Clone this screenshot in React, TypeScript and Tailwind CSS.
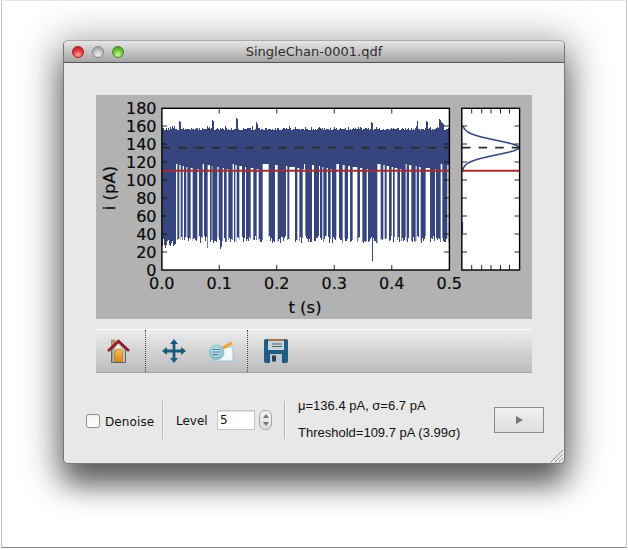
import React from "react";

const gapsA: [number, number][] = [[48,52],[58,62],[68,72],[79,82],[92,98],[112,117],[128,132],[143,150],[155,157],[172,176],[188,192],[200,205],[218,222],[226,230],[238,246],[255,258],[272,280],[290,296],[308,326],[345,353],[378,382],[388,405],[412,418],[428,436]];
const gapsB: [number, number][] = [[0,3],[24,30],[45,48],[55,58],[68,72],[80,84],[97,105],[116,122],[132,138],[146,160],[168,175],[188,192],[220,230],[238,242],[248,255],[263,267],[272,280],[288,292],[305,308],[315,322],[335,338],[345,350],[365,378],[393,396],[410,415],[430,434]];
const gaps = [
  ...gapsA.map(([a, b]) => [160 + a / 3, 160 + b / 3]),
  ...gapsB.map(([a, b]) => [304 + a / 3, 304 + b / 3]),
];

let seed = 12345;
const rnd = () => {
  seed = (seed * 16807) % 2147483647;
  return seed / 2147483647;
};

const peaks: Record<number, number> = { 179: 121, 180: 122, 212: 120, 213: 121, 236: 118, 237: 119, 256: 122, 257: 124, 371: 122, 372: 123, 417: 121, 426: 121, 427: 122, 439: 119, 440: 120, 441: 122, 442: 123, 443: 124 };
const deep: Record<number, number> = { 372: 261, 207: 248, 208: 247, 220: 249, 221: 247, 348: 248, 183: 246, 165: 248 };

const cols: { x: number; top: number; bottom: number }[] = [];
for (let x = 162; x < 449; x++) {
  const top = peaks[x] ?? Math.round(128 + rnd() * 2.4 - (rnd() > 0.88 ? 2 : 0));
  const bottom = deep[x] ?? Math.round(236 + rnd() * 7 + (x < 176 ? 3 : 0));
  cols.push({ x, top, bottom });
}

const yTicks = [20, 40, 60, 80, 100, 120, 140, 160];
const yOf = (v: number) => 270 - v * 0.9;
const xTicks = [0, 0.1, 0.2, 0.3, 0.4, 0.5];
const xOf = (v: number) => 161.7 + v * 575.2;
const sideTicks = [471.7, 481.7, 491, 500.5, 509.5];

let gauss = "";
for (let y = 126; y <= 170; y += 1) {
  const x = 462.5 + 56.5 * Math.exp(-((y - 147.6) ** 2) / (2 * 7.2 ** 2));
  gauss += `${y === 126 ? "M" : "L"}${x.toFixed(1)} ${y} `;
}

function Chart() {
  const font = { fontFamily: '"DejaVu Sans", sans-serif', fontSize: 16 };
  return (
    <svg width={436} height={224} viewBox="96 95 436 224" className="block">
      <rect x={162} y={108.5} width={287.3} height={161.5} fill="#fff" />
      <rect x={462} y={108.5} width={57.5} height={161.5} fill="#fff" />
      {cols.map((c) => (
        <rect key={c.x} x={c.x} y={c.top} width={1} height={c.bottom - c.top} fill="#37457f" />
      ))}
      {gaps.map(([a, b], i) => (
        <rect key={i} x={a} y={164 + (i * 7) % 6} width={b - a} height={106 - ((i * 7) % 6)} fill="#fff" />
      ))}
      <path d="M162 147.6H449" stroke="#2b2b2b" strokeWidth={1.8} strokeDasharray="8.5 8.1" />
      <path d="M162 170.7H449" stroke="#a52c32" strokeWidth={2} />

      <path d={gauss} fill="none" stroke="#37457f" strokeWidth={1.5} />
      <path d="M462.6 222V233" stroke="#37457f" strokeWidth={1} />
      <path d="M462 147.6H519" stroke="#2b2b2b" strokeWidth={1.8} strokeDasharray="8.5 8.1" />
      <path d="M462 170.7H519" stroke="#a52c32" strokeWidth={2} />

      <g stroke="#111" strokeWidth={0.9} fill="none">
        {yTicks.map((v) => (
          <path key={v} d={`M162 ${yOf(v)}h5 M449 ${yOf(v)}h-5 M462 ${yOf(v)}h5 M519.5 ${yOf(v)}h-5`} />
        ))}
        {xTicks.slice(1, 5).map((v) => (
          <path key={v} d={`M${xOf(v)} 108.5v5 M${xOf(v)} 270v-5`} />
        ))}
        {sideTicks.map((x) => (
          <path key={x} d={`M${x} 108.5v5 M${x} 270v-5`} />
        ))}
      </g>
      <rect x={161.9} y={108.3} width={287.5} height={161.7} fill="none" stroke="#000" strokeWidth={1.4} />
      <rect x={461.8} y={108.3} width={57.8} height={161.7} fill="none" stroke="#000" strokeWidth={1.4} />

      <g {...font} fill="#0a0a0a" stroke="#0a0a0a" strokeWidth={0.2}>
        {[0, ...yTicks, 180].map((v) => (
          <text key={v} x={156.5} y={yOf(v) + 5.5} textAnchor="end">
            {v}
          </text>
        ))}
        {xTicks.map((v) => (
          <text key={v} x={xOf(v)} y={289} textAnchor="middle">
            {v.toFixed(1)}
          </text>
        ))}
        <text x={305} y={313} textAnchor="middle" fontSize={16.5}>
          t (s)
        </text>
        <text transform="translate(115 188) rotate(-90)" textAnchor="middle" fontSize={16.5}>
          i (pA)
        </text>
      </g>
    </svg>
  );
}

function HomeIcon() {
  return (
    <svg width={23} height={24} viewBox="0 0 23 24">
      <defs>
        <linearGradient id="door" x1="0" y1="0" x2="0" y2="1">
          <stop offset="0" stopColor="#f6c052" />
          <stop offset="1" stopColor="#e08a1c" />
        </linearGradient>
        <linearGradient id="wall" x1="0" y1="0" x2="1" y2="0">
          <stop offset="0" stopColor="#8f8f8f" />
          <stop offset="0.4" stopColor="#f4f1ea" />
          <stop offset="1" stopColor="#bdbab2" />
        </linearGradient>
      </defs>
      <rect x={4.5} y={1} width={3.5} height={8} fill="#c49a6c" stroke="#8b6a48" strokeWidth={0.5} />
      <path d="M4.5 11L11.5 4l7 7v12.5h-14z" fill="url(#wall)" stroke="#555" strokeWidth={0.9} />
      <path d="M7.5 22.5V14a4 4 0 018 0v8.5z" fill="url(#door)" stroke="#a8660f" strokeWidth={0.6} />
      <path d="M1 12L11.5 2 22 12" fill="none" stroke="#8e1a2a" strokeWidth={2.6} />
    </svg>
  );
}

function MoveIcon() {
  return (
    <svg width={24} height={24} viewBox="0 0 24 24">
      <path
        d="M12 0l4 5h-2.6v5.6H19V8l5 4-5 4v-2.6h-5.6V19H16l-4 5-4-5h2.6v-5.6H5V16l-5-4 5-4v2.6h5.6V5H8z"
        fill="#1d5a7e"
      />
    </svg>
  );
}

function EditIcon() {
  return (
    <svg width={26} height={22} viewBox="0 0 26 22">
      <defs>
        <radialGradient id="lens" cx="0.5" cy="0.4" r="0.6">
          <stop offset="0" stopColor="#d8eef2" />
          <stop offset="1" stopColor="#6fb0bf" />
        </radialGradient>
      </defs>
      <rect x={7} y={7} width={18} height={14} fill="#f2f8fb" stroke="#9cc4d6" strokeWidth={1} />
      <circle cx={8.5} cy={12.5} r={7.5} fill="url(#lens)" stroke="#9fc9d2" strokeWidth={1} />
      <path d="M5 9.5h7M5 12h7M5 14.5h5" stroke="#3f8296" strokeWidth={1.1} />
      <path d="M14 7l9-5.5 1.8 2.6-9 5.5z" fill="#efa335" />
    </svg>
  );
}

function SaveIcon() {
  return (
    <svg width={24} height={24} viewBox="0 0 24 24">
      <path d="M2 0h20a2 2 0 012 2v20a2 2 0 01-2 2H2a2 2 0 01-2-2V2a2 2 0 012-2z" fill="#1e5b85" />
      <rect x={4} y={0} width={16} height={2} fill="#a5734c" />
      <rect x={4} y={2} width={16} height={9} fill="#c9d3da" />
      <path d="M8 5h10M8 7.5h10" stroke="#45606f" strokeWidth={1.1} />
      <rect x={6} y={15} width={12} height={9} fill="#bcc6cc" />
      <rect x={8} y={16.5} width={4} height={6} fill="#2b3f4c" />
    </svg>
  );
}

function DottedSep() {
  return <div className="h-[42px] w-0 border-l border-dotted border-[#444]" />;
}

function Sep() {
  return <div className="h-[38px] w-[2px] border-l border-[#b5b5b5] bg-[#f6f6f6]" />;
}

export default function App() {
  return (
    <div className="h-[550px] w-[628px] overflow-hidden bg-white [font-family:'DejaVu_Sans',sans-serif]">
      <div className="ml-px h-[548px] w-[626px] border border-b-[#888] border-l-[#c4c4c4] border-r-[#c8c8c8] border-t-[#e8e8e8] pl-[61px] pt-[39px]">
        <div className="relative h-[424px] w-[502px] rounded-[5px] border border-[#777] border-t-[#aaa] bg-[#e8e8e8] shadow-[0_22px_28px_-2px_rgba(0,0,0,0.5),0_6px_38px_8px_rgba(0,0,0,0.33)]">
          <div className="relative flex h-[22px] items-center rounded-t-[4px] border-b border-[#555] bg-gradient-to-b from-[#e6e6e6] to-[#a6a6a6] pl-[8px]">
            <div className="flex gap-[8px]">
              <div className="h-[12px] w-[12px] rounded-full border border-[#a0242a] bg-[radial-gradient(circle_at_50%_80%,#ffa89c,#e0333a_55%,#b3141c)]" />
              <div className="h-[12px] w-[12px] rounded-full border border-[#8a8a8a] bg-[radial-gradient(circle_at_50%_80%,#f2f2f2,#bdbdbd_55%,#8f8f8f)]" />
              <div className="h-[12px] w-[12px] rounded-full border border-[#4c8a22] bg-[radial-gradient(circle_at_50%_80%,#d0f5a0,#6cc23a_55%,#3c8c18)]" />
            </div>
            <div className="absolute inset-x-0 top-0 text-center text-[13px] leading-[22px] text-[#2e2e2e]">
              SingleChan-0001.qdf
            </div>
          </div>

          <div className="px-[32px] pt-[32px]">
            <div className="bg-[#b2b2b2]">
              <Chart />
            </div>

            <div className="mt-[10px] flex h-[44px] items-center border-b border-t border-b-[#a4a4a4] border-t-[#f8f8f8] bg-gradient-to-b from-[#ececec] to-[#bcbcbc]">
              <div className="flex w-[49px] pl-[11px]">
                <HomeIcon />
              </div>
              <DottedSep />
              <div className="ml-[16px] flex w-[24px] justify-center">
                <MoveIcon />
              </div>
              <div className="ml-[22px]">
                <EditIcon />
              </div>
              <div className="ml-[13px]">
                <DottedSep />
              </div>
              <div className="ml-[16px]">
                <SaveIcon />
              </div>
            </div>
          </div>

          <div className="ml-[22px] mt-[26px] flex items-center text-[12px] text-[#111]">
            <div className="h-[14px] w-[14px] translate-y-px rounded-[3px] border border-[#8e8e8e] bg-gradient-to-b from-[#f2f2f2] to-white" />
            <span className="ml-[5px] w-[50px] translate-y-[2px] tracking-[0.1px]">Denoise</span>
            <div className="ml-[7px]">
              <Sep />
            </div>
            <span className="ml-[12px] w-[32px] translate-y-px">Level</span>
            <div className="ml-[9px] flex h-[20px] w-[38px] items-center border border-[#c6c6c6] bg-white pl-[2px] shadow-[inset_0_1px_0_#ddd]">
              5
            </div>
            <div className="ml-[4px] flex h-[20px] w-[13px] flex-col items-center justify-center gap-[4px] rounded-[6px] border border-[#a8a8a8] bg-gradient-to-b from-[#f4f4f4] to-[#dcdcdc]">
              <div className="h-0 w-0 border-x-[3px] border-b-[4px] border-x-transparent border-b-[#777]" />
              <div className="h-0 w-0 border-x-[3px] border-t-[4px] border-x-transparent border-t-[#777]" />
            </div>
            <div className="ml-[12px]">
              <Sep />
            </div>
            <div className="ml-[12px] w-[196px] text-[13px] [font-family:'Liberation_Sans',sans-serif]">
              <div className="leading-[14px]">μ=136.4 pA, σ=6.7 pA</div>
              <div className="mt-[13px] leading-[14px]">Threshold=109.7 pA (3.99σ)</div>
            </div>
            <div className="flex h-[26px] w-[50px] items-center justify-center border border-[#8c8c8c] bg-gradient-to-b from-[#f0f0f0] to-[#dedede]">
              <div className="h-0 w-0 border-y-[4px] border-l-[7px] border-y-transparent border-l-[#777]" />
            </div>
          </div>

          <svg width={14} height={14} viewBox="0 0 14 14" className="absolute bottom-0 right-0">
            <path d="M1 13L13 1M5 13l8-8M9 13l4-4" stroke="#777" strokeWidth={1} strokeDasharray="1.5 0.7" />
          </svg>
        </div>
      </div>
    </div>
  );
}
